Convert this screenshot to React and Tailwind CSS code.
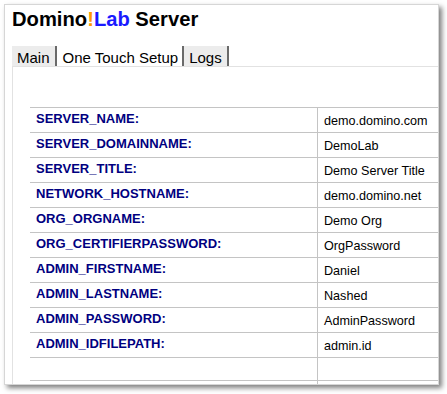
const rows = [
  ['SERVER_NAME:', 'demo.domino.com'],
  ['SERVER_DOMAINNAME:', 'DemoLab'],
  ['SERVER_TITLE:', 'Demo Server Title'],
  ['NETWORK_HOSTNAME:', 'demo.domino.net'],
  ['ORG_ORGNAME:', 'Demo Org'],
  ['ORG_CERTIFIERPASSWORD:', 'OrgPassword'],
  ['ADMIN_FIRSTNAME:', 'Daniel'],
  ['ADMIN_LASTNAME:', 'Nashed'],
  ['ADMIN_PASSWORD:', 'AdminPassword'],
  ['ADMIN_IDFILEPATH:', 'admin.id'],
];

const tabs = [
  { name: 'Main', active: false },
  { name: 'One Touch Setup', active: true },
  { name: 'Logs', active: false },
];

export default function App() {
  return (
    <div className="w-[447px] h-[394px] bg-white overflow-hidden pt-[4px] pl-[4px] font-['Liberation_Sans',Arial,sans-serif] text-black">
      <div className="w-[435px] h-[381px] bg-white border border-[#d6d6d6] shadow-[3px_3px_5px_rgba(0,0,0,0.5)] overflow-hidden">
        {/* Title */}
        <h1 className="pl-[7px] pt-[2px] text-[20.2px] leading-[24px] font-bold">
          Domino<span className="text-[#ff9900]">!</span>
          <span className="text-[#1a1aff]">Lab</span> Server
        </h1>

        {/* Tabs */}
        <div className="ml-[7px] mt-[15px] flex h-[20px] text-[15px]">
          {tabs.map((t) => (
            <div
              key={t.name}
              className={`h-[20px] pt-[3px] leading-[17px] border-r-2 border-r-[#6a6a6a] whitespace-nowrap ${
                t.active ? 'bg-white pl-[6px] pr-[4px]' : 'bg-[#ececec] pl-[5px] pr-[5px]'
              }`}
            >
              {t.name}
            </div>
          ))}
        </div>

        {/* Panel */}
        <div className="ml-[7px] h-[400px] border-l border-t border-[#e2e2e2]">
          <div className="ml-[17px] mt-[40px] w-[420px] border-t border-[#c4c4c4]">
            {rows.map(([label, value]) => (
              <div key={label} className="flex h-[25px] border-b border-[#c4c4c4]">
                <div className="w-[288px] border-r border-[#c4c4c4] pl-[6px] pt-[4px] text-[13px] leading-[14px] font-bold text-[#000080]">
                  {label}
                </div>
                <div className="flex-1 pl-[6px] pt-[6px] text-[12.6px] leading-[14px]">{value}</div>
              </div>
            ))}
            <div className="flex h-[23px] border-b border-[#c4c4c4]">
              <div className="w-[288px] border-r border-[#c4c4c4]" />
              <div className="flex-1" />
            </div>
            <div className="flex h-[25px] border-b border-[#c4c4c4]">
              <div className="w-[288px] border-r border-[#c4c4c4]" />
              <div className="flex-1" />
            </div>
          </div>
        </div>
      </div>
    </div>
  );
}
